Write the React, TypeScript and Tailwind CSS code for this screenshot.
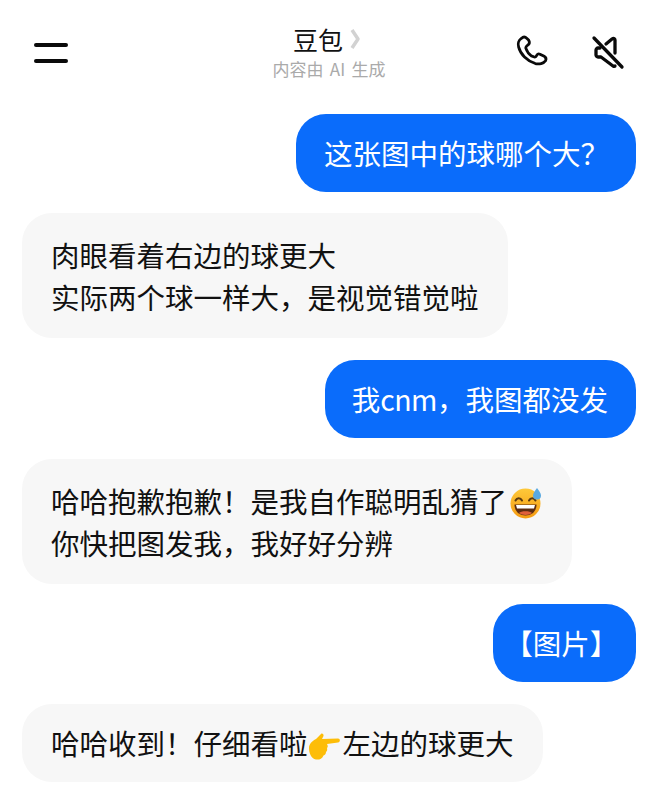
function SweatEmoji() {
  return (
    <svg className="ml-[3px] mr-[1px] inline-block size-[32px] align-[-6px]" viewBox="0 0 32 32">
      <defs>
        <linearGradient id="face" x1="0" y1="0" x2="0" y2="1">
          <stop offset="0" stopColor="#fec93a" />
          <stop offset="1" stopColor="#f59b12" />
        </linearGradient>
      </defs>
      <circle cx="15.500" cy="16.500" r="15" fill="url(#face)" />
      <path d="M5.500 13.500c1.500-3 5-3 6.500 0M19 13.500c1.500-3 5-3 6.500 0" fill="none" stroke="#5b3a10" strokeWidth="2" strokeLinecap="round" />
      <path d="M4.500 17.500h22c0 6.500-4.500 11-11 11s-11-4.500-11-11z" fill="#5c2d12" />
      <path d="M6 18h19l-1 3.500H7z" fill="#fff" />
      <path d="M9 26c2-2.500 11-2.500 13 0-3 2.500-10 2.500-13 0z" fill="#e0603a" />
      <path d="M27 1c2 3 4 5 4 7.500a4 4 0 0 1-8 0C23 6 25 4 27 1z" fill="#5aa9e0" />
    </svg>
  )
}

function PointEmoji() {
  return (
    <svg className="mr-[2px] inline-block h-[27px] w-[33px] align-[-5px]" viewBox="0 0 33 27">
      <path
        d="M1 15c0-4 3-7 7-9l5-5c1-1 3 0 2.500 2L14 6l16-.500c2.500 0 2.500 3.500 0 4L19 11c1 2 1 3 0 4 .5 2 0 3-1 4 0 2-1 3-2.500 3.500C14 26 11 27 8 26.500 3 25.500 1 20 1 15z"
        fill="#fdbd08"
      />
    </svg>
  )
}

function PhoneIcon() {
  return (
    <svg className="size-[45px]" viewBox="0 0 45 45" fill="none" stroke="#0a0a0a" strokeWidth="3" strokeLinejoin="round">
      <path
        transform="translate(3 1) scale(.93)"
        d="M9 8C6 10 5 14 6 17c2 8 9 15 18 18 4 1 9 0 11-3 1-2 0-4-2-5l-4-2c-2-1-3 0-4 2-1 2-3 1-5 0-3-2-5-5-6-8-1-2 1-3 2-4 2-1 2-3 1-5l-2-2c-2-2-4-2-6 0z"
      />
    </svg>
  )
}

function MutedIcon() {
  return (
    <svg className="size-[45px]" viewBox="0 0 45 45" fill="none" stroke="#0a0a0a" strokeWidth="3.300" strokeLinecap="round" strokeLinejoin="round">
      <path d="M9 8l28 29" />
      <path d="M21 14l6-5c2-1.500 3 0 3 1v13" />
      <path d="M15 18h-2c-1 0-2 1-2 2v5c0 1 1 2 2 2h3l12 9c1 .500 2 .500 2 0" />
    </svg>
  )
}

function UserBubble({ children, className }: { children: React.ReactNode; className: string }) {
  return <div className={`self-end rounded-[30px] bg-[#0a6cfb] py-[18px] text-white ${className}`}>{children}</div>
}

function BotBubble({ children, className }: { children: React.ReactNode; className: string }) {
  return <div className={`self-start rounded-[30px] bg-[#f7f7f7] px-[29px] text-[#111] ${className}`}>{children}</div>
}

export default function App() {
  return (
    <div className="h-[800px] w-[658px] overflow-hidden bg-white font-['Noto_Sans_CJK_SC','Noto_Sans',sans-serif]">
      <header className="grid h-[114px] grid-cols-[1fr_auto_1fr] items-start px-[28px] pt-[25px]">
        <div className="ml-[6px] mt-[18px] flex w-[34px] flex-col gap-[12px]">
          <div className="h-[4px] rounded-full bg-[#0a0a0a]" />
          <div className="h-[4px] rounded-full bg-[#0a0a0a]" />
        </div>
        <div className="flex flex-col items-center">
          <div className="flex h-[28px] items-center text-[25px] leading-[28px] text-[#111]">
            豆包
            <svg className="ml-[6px] mr-[4px] h-[24px] w-[12px]" viewBox="0 0 12 24" fill="none" stroke="#d2d2d2" strokeWidth="3.500" strokeLinejoin="round">
              <path d="M3 3l6 9-6 9" />
            </svg>
          </div>
          <div className="mt-[5px] text-[17px] leading-[22px] text-[#aaa] [word-spacing:2.500px]">内容由 AI 生成</div>
        </div>
        <div className="mt-[5px] flex items-center justify-end gap-[30px]">
          <PhoneIcon />
          <MutedIcon />
        </div>
      </header>
      <main className="flex flex-col gap-[21px] px-[22px] text-[28.500px] leading-[42px]">
        <UserBubble className="pl-[28px] pr-[27px]">{'这张图中的球哪个大\uFF1F'}</UserBubble>
        <BotBubble className="py-[20.500px]">
          肉眼看着右边的球更大
          <br />
          {'实际两个球一样大\uFF0C是视觉错觉啦'}
        </BotBubble>
        <UserBubble className="mt-[1px] pl-[27px] pr-[28px]">
          我<span className="tracking-[-0.500px]">cnm</span>
          {'\uFF0C我图都没发'}
        </UserBubble>
        <BotBubble className="py-[20.500px]">
          {'哈哈抱歉抱歉\uFF01是我自作聪明乱猜了'}
          <SweatEmoji />
          <br />
          {'你快把图发我\uFF0C我好好分辨'}
        </BotBubble>
        <UserBubble className="-mt-[1px] pl-[25px] pr-[32px]">
          <span className="[font-feature-settings:'halt']">【</span>图片<span className="[font-feature-settings:'halt']">】</span>
        </UserBubble>
        <BotBubble className="mt-[1px] py-[18px]">
          {'哈哈收到\uFF01仔细看啦'}
          <PointEmoji />
          左边的球更大
        </BotBubble>
      </main>
    </div>
  )
}
